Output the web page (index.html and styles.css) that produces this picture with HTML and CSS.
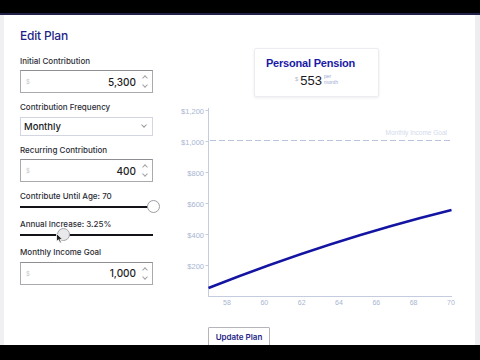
FILE: index.html
```html
<!DOCTYPE HTML>
<html>
<head>
	<title>Edit Plan</title>
	<link rel="stylesheet" href="styles.css">
</head>
<body>
	<div class="topbar"></div>
	<div class="frame">
		<div class="app">
			<section class="plan-form">
				<h1 class="titulo">Edit Plan</h1>
				<div class="campo">
					<label>Initial Contribution</label>
					<div class="entrada">
						<span class="moneda">$</span>
						<span class="valor">5,300</span>
						<span class="spin"><i class="up"></i><i class="down"></i></span>
					</div>
				</div>
				<div class="campo">
					<label>Contribution Frequency</label>
					<div class="selector">
						<span>Monthly</span>
						<i class="chevron"></i>
					</div>
				</div>
				<div class="campo">
					<label>Recurring Contribution</label>
					<div class="entrada">
						<span class="moneda">$</span>
						<span class="valor">400</span>
						<span class="spin"><i class="up"></i><i class="down"></i></span>
					</div>
				</div>
				<div class="campo rango">
					<label>Contribute Until Age: 70</label>
					<div class="slider">
						<div class="pista"></div>
						<div class="perilla" style="left: 126.5px"></div>
					</div>
				</div>
				<div class="campo rango">
					<label>Annual Increase: 3.25%</label>
					<div class="slider">
						<div class="pista"></div>
						<div class="perilla activa" style="left: 36.5px"></div>
						<svg class="cursor" width="8" height="11" viewBox="0 0 8 11"><path d="M0.5 0.5 L0.5 8.5 L2.5 6.8 L4 10 L5.3 9.4 L3.9 6.3 L6.6 6.3 Z" fill="#222" stroke="#fff" stroke-width="0.8"/></svg>
					</div>
				</div>
				<div class="campo">
					<label>Monthly Income Goal</label>
					<div class="entrada">
						<span class="moneda">$</span>
						<span class="valor">1,000</span>
						<span class="spin"><i class="up"></i><i class="down"></i></span>
					</div>
				</div>
			</section>
			<section class="results">
				<div class="tarjeta">
					<div class="tarjeta-titulo">Personal Pension</div>
					<div class="monto">
						<span class="signo">$</span>
						<span class="cifra">553</span>
						<span class="periodo">per<br>month</span>
					</div>
				</div>
				<svg class="grafica" width="281" height="210" viewBox="176 100 281 210">
					<g class="ejes">
						<line x1="208.5" y1="108" x2="208.5" y2="296"/>
						<line x1="208" y1="296.5" x2="452" y2="296.5"/>
						<line x1="205.5" y1="110.5" x2="208.5" y2="110.5"/>
						<line x1="205.5" y1="141.5" x2="208.5" y2="141.5"/>
						<line x1="205.5" y1="172.5" x2="208.5" y2="172.5"/>
						<line x1="205.5" y1="203.5" x2="208.5" y2="203.5"/>
						<line x1="205.5" y1="234.5" x2="208.5" y2="234.5"/>
						<line x1="205.5" y1="265.5" x2="208.5" y2="265.5"/>
					</g>
					<g class="etiquetas-y">
						<text x="204" y="113.5">$1,200</text>
						<text x="204" y="144.5">$1,000</text>
						<text x="204" y="175.5">$800</text>
						<text x="204" y="206.5">$600</text>
						<text x="204" y="237.5">$400</text>
						<text x="204" y="268.5">$200</text>
					</g>
					<g class="etiquetas-x">
						<text x="227" y="305">58</text>
						<text x="264.3" y="305">60</text>
						<text x="301.7" y="305">62</text>
						<text x="339" y="305">64</text>
						<text x="376.3" y="305">66</text>
						<text x="413.6" y="305">68</text>
						<text x="451" y="305">70</text>
					</g>
					<line class="meta" x1="210" y1="140.5" x2="452" y2="140.5"/>
					<text class="meta-texto" x="447" y="135">Monthly Income Goal</text>
					<path class="linea" d="M208.5 288 Q330 240 451.5 210"/>
				</svg>
				<button class="boton">Update Plan</button>
			</section>
		</div>
	</div>
	<div class="bottombar"></div>
</body>
</html>
```

FILE: styles.css
```css
*, *::after, *::before{
	box-sizing: border-box;
	margin: 0;
	padding: 0;
}
html, body{
	width: 480px;
	height: 360px;
	overflow: hidden;
	background-color: #000;
}
body{
	font-family: Inter, "Liberation Sans", sans-serif;
	color: #2a2a33;
}
.topbar{
	height: 15px;
	border-top: 13px solid #000;
	background-color: #20204a;
}
.bottombar{
	height: 15px;
	background-color: #000;
}
.frame{
	height: 330px;
	background-color: #fff;
	border-left: 4px solid #f0f0f3;
	border-right: 5px solid #eeeef1;
	overflow: hidden;
}
.app{
	display: flex;
	padding: 12.5px 0 0 16px;
}
.plan-form{
	width: 133px;
	display: flex;
	flex-direction: column;
}
.titulo{
	font-size: 12px;
	line-height: 16px;
	font-weight: 500;
	letter-spacing: -0.2px;
	color: #1f1f86;
	margin-bottom: 12px;
}
.campo{
	display: flex;
	flex-direction: column;
	margin-bottom: 9px;
}
.campo label{
	font-size: 8px;
	line-height: 11px;
	font-weight: 500;
	color: #2c2c36;
	margin-bottom: 3.5px;
}
.campo.rango label{
	margin-bottom: 0;
}
.entrada{
	display: flex;
	align-items: center;
	height: 23px;
	border: 1px solid #a9a9ae;
	border-top-color: #8d8d92;
	padding: 0 3px 0 5px;
}
.moneda{
	font-size: 6px;
	color: #c4c4c8;
}
.valor{
	flex: 1;
	text-align: right;
	font-size: 10px;
	font-weight: 500;
	color: #1d1d24;
	padding-right: 5px;
}
.spin{
	display: flex;
	flex-direction: column;
	gap: 3px;
	width: 8px;
	align-items: center;
}
.spin i{
	display: block;
	width: 4px;
	height: 4px;
	border-left: 1px solid #a2a2a8;
	border-top: 1px solid #a2a2a8;
}
.spin .up{
	transform: rotate(45deg);
	margin-top: 2px;
}
.spin .down{
	transform: rotate(225deg);
	margin-bottom: 2px;
}
.selector{
	display: flex;
	align-items: center;
	justify-content: space-between;
	height: 19px;
	border: 1px solid #d3d6e0;
	padding: 0 6px 0 3px;
	font-size: 9.5px;
	font-weight: 500;
	color: #1c1c26;
}
.chevron{
	display: block;
	width: 4px;
	height: 4px;
	border-right: 1px solid #9a9aa2;
	border-bottom: 1px solid #9a9aa2;
	transform: rotate(45deg);
	margin-top: -2px;
}
.slider{
	position: relative;
	height: 8px;
}
.pista{
	height: 2px;
	margin-top: 3.5px;
	background-color: #141418;
}
.perilla{
	position: absolute;
	top: -2.25px;
	width: 13.5px;
	height: 13.5px;
	border-radius: 50%;
	border: 1px solid #9c9ca2;
	background-color: #fff;
}
.perilla.activa{
	background-color: #e9e9ec;
	border-color: #a4a4aa;
}
.cursor{
	position: absolute;
	left: 36px;
	top: 3px;
}
.results{
	width: 281px;
	margin-left: 23px;
	display: flex;
	flex-direction: column;
}
.tarjeta{
	align-self: center;
	width: 125px;
	height: 49px;
	margin-top: 20.5px;
	border: 1px solid #ececf1;
	border-radius: 2px;
	box-shadow: 0 1px 3px rgba(20, 20, 60, 0.08);
	padding-top: 8px;
	text-align: center;
	font-family: "Liberation Sans", Arial, sans-serif;
}
.tarjeta-titulo{
	font-size: 11px;
	line-height: 13px;
	font-weight: bold;
	letter-spacing: -0.2px;
	padding-right: 12px;
	color: #1a1aa6;
}
.monto{
	display: flex;
	justify-content: center;
	align-items: center;
	margin-top: 3px;
	gap: 2px;
}
.signo{
	font-size: 6px;
	color: #b5b9c8;
	margin-top: -3px;
}
.cifra{
	font-size: 13px;
	line-height: 15px;
	color: #1a1a22;
}
.periodo{
	font-size: 5px;
	line-height: 5.5px;
	color: #9aaad4;
	text-align: left;
	margin-top: -2px;
}
.grafica{
	display: block;
	margin-top: 3px;
	font-family: "Liberation Sans", Arial, sans-serif;
}
.ejes line{
	stroke: #c6cce0;
	stroke-width: 1;
}
.etiquetas-y text{
	font-size: 7.5px;
	fill: #a9b5d2;
	text-anchor: end;
}
.etiquetas-x text{
	font-size: 7px;
	fill: #a9b5d2;
	text-anchor: middle;
}
.meta{
	stroke: #b9c4df;
	stroke-width: 1;
	stroke-dasharray: 6 3;
}
.meta-texto{
	font-size: 6.5px;
	fill: #d3daeb;
	text-anchor: end;
}
.linea{
	fill: none;
	stroke: #1414a2;
	stroke-width: 2.5;
}
.boton{
	align-self: flex-start;
	margin: 17px 0 0 32px;
	width: 62px;
	height: 24px;
	background-color: #fff;
	border: 1px solid #b4b4ba;
	border-radius: 1px;
	padding-bottom: 4px;
	font-family: Inter, "Liberation Sans", sans-serif;
	font-size: 8px;
	font-weight: 600;
	color: #1f1f86;
}
```
